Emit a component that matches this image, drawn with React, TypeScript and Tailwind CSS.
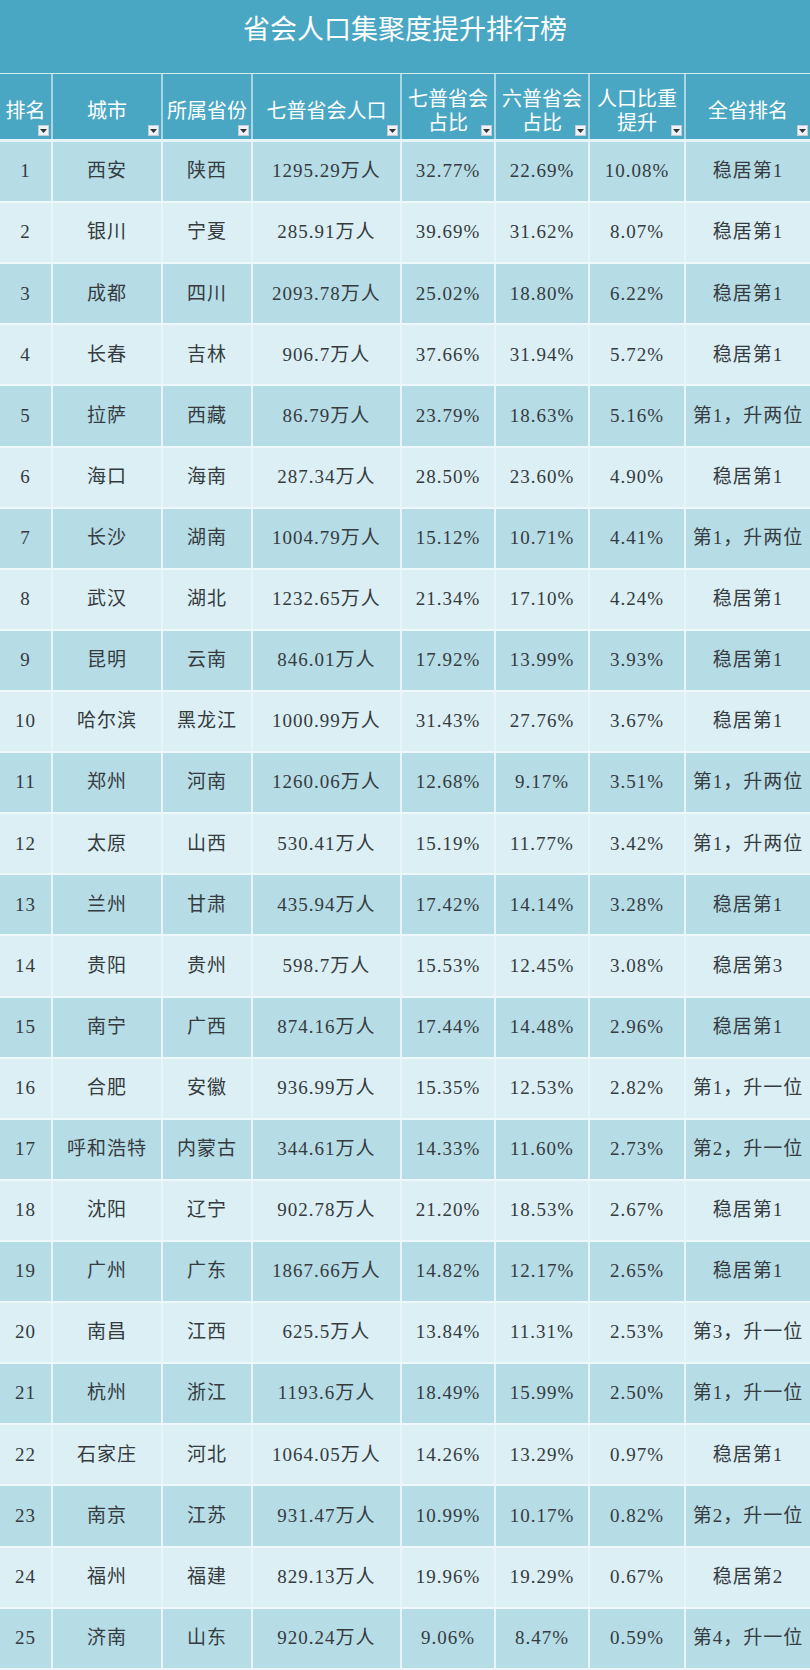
import React from 'react';

type Row = [string, string, string, string, string, string, string, string];

const rows: Row[] = [
  ['1', '西安', '陕西', '1295.29万人', '32.77%', '22.69%', '10.08%', '稳居第1'],
  ['2', '银川', '宁夏', '285.91万人', '39.69%', '31.62%', '8.07%', '稳居第1'],
  ['3', '成都', '四川', '2093.78万人', '25.02%', '18.80%', '6.22%', '稳居第1'],
  ['4', '长春', '吉林', '906.7万人', '37.66%', '31.94%', '5.72%', '稳居第1'],
  ['5', '拉萨', '西藏', '86.79万人', '23.79%', '18.63%', '5.16%', '第1，升两位'],
  ['6', '海口', '海南', '287.34万人', '28.50%', '23.60%', '4.90%', '稳居第1'],
  ['7', '长沙', '湖南', '1004.79万人', '15.12%', '10.71%', '4.41%', '第1，升两位'],
  ['8', '武汉', '湖北', '1232.65万人', '21.34%', '17.10%', '4.24%', '稳居第1'],
  ['9', '昆明', '云南', '846.01万人', '17.92%', '13.99%', '3.93%', '稳居第1'],
  ['10', '哈尔滨', '黑龙江', '1000.99万人', '31.43%', '27.76%', '3.67%', '稳居第1'],
  ['11', '郑州', '河南', '1260.06万人', '12.68%', '9.17%', '3.51%', '第1，升两位'],
  ['12', '太原', '山西', '530.41万人', '15.19%', '11.77%', '3.42%', '第1，升两位'],
  ['13', '兰州', '甘肃', '435.94万人', '17.42%', '14.14%', '3.28%', '稳居第1'],
  ['14', '贵阳', '贵州', '598.7万人', '15.53%', '12.45%', '3.08%', '稳居第3'],
  ['15', '南宁', '广西', '874.16万人', '17.44%', '14.48%', '2.96%', '稳居第1'],
  ['16', '合肥', '安徽', '936.99万人', '15.35%', '12.53%', '2.82%', '第1，升一位'],
  ['17', '呼和浩特', '内蒙古', '344.61万人', '14.33%', '11.60%', '2.73%', '第2，升一位'],
  ['18', '沈阳', '辽宁', '902.78万人', '21.20%', '18.53%', '2.67%', '稳居第1'],
  ['19', '广州', '广东', '1867.66万人', '14.82%', '12.17%', '2.65%', '稳居第1'],
  ['20', '南昌', '江西', '625.5万人', '13.84%', '11.31%', '2.53%', '第3，升一位'],
  ['21', '杭州', '浙江', '1193.6万人', '18.49%', '15.99%', '2.50%', '第1，升一位'],
  ['22', '石家庄', '河北', '1064.05万人', '14.26%', '13.29%', '0.97%', '稳居第1'],
  ['23', '南京', '江苏', '931.47万人', '10.99%', '10.17%', '0.82%', '第2，升一位'],
  ['24', '福州', '福建', '829.13万人', '19.96%', '19.29%', '0.67%', '稳居第2'],
  ['25', '济南', '山东', '920.24万人', '9.06%', '8.47%', '0.59%', '第4，升一位'],
];

const headers: string[][] = [
  ['排名'],
  ['城市'],
  ['所属省份'],
  ['七普省会人口'],
  ['七普省会', '占比'],
  ['六普省会', '占比'],
  ['人口比重', '提升'],
  ['全省排名'],
];

const cols = 'grid grid-cols-[53px_110px_90px_149px_94px_94px_96px_1fr]';

// little excel-style filter button
function FilterBtn() {
  return (
    <span className="absolute bottom-[3px] right-[2px] flex h-[11px] w-[11px] items-center justify-center border border-[#c3ccd4] bg-[#eef1f5]">
      <svg width="7" height="4" viewBox="0 0 7 4">
        <path d="M0 0h7L3.5 4z" fill="#333" />
      </svg>
    </span>
  );
}

export default function App() {
  return (
    <div className="w-[810px] bg-[#4aa7c3] font-['Noto_Sans_CJK_SC',sans-serif]">
      <div className="flex h-[73px] items-start justify-center pt-[8px] text-[27px] text-white">
        省会人口集聚度提升排行榜
      </div>
      <div className={`${cols} h-[69px] border-t border-[#cfe9f0] border-b-[3px] border-b-[#e6f4f8]`}>
        {headers.map((h, i) => (
          <div
            key={i}
            className={`relative flex flex-col items-center justify-center pt-[6px] text-[20px] leading-[24px] text-white ${
              i < 7 ? 'border-r-2 border-[#a9d6e3]' : ''
            }`}
          >
            {h.map((line) => (
              <span key={line}>{line}</span>
            ))}
            <FilterBtn />
          </div>
        ))}
      </div>
      <div>
        {rows.map((r, ri) => (
          <div
            key={r[0]}
            className={`${cols} h-[61.12px] border-b-2 border-[#eef8fb] ${
              ri % 2 === 0 ? 'bg-[#b6dce6]' : 'bg-[#dbeff4]'
            }`}
          >
            {r.map((c, ci) => (
              <div
                key={ci}
                className={`flex items-center justify-center whitespace-nowrap font-['Liberation_Serif','Noto_Sans_CJK_SC',serif] text-[19px] tracking-[1px] text-[#353b3e] ${
                  ci < 7 ? 'border-r-2 border-[#e8f5f8]' : ''
                }`}
              >
                {c}
              </div>
            ))}
          </div>
        ))}
      </div>
    </div>
  );
}
